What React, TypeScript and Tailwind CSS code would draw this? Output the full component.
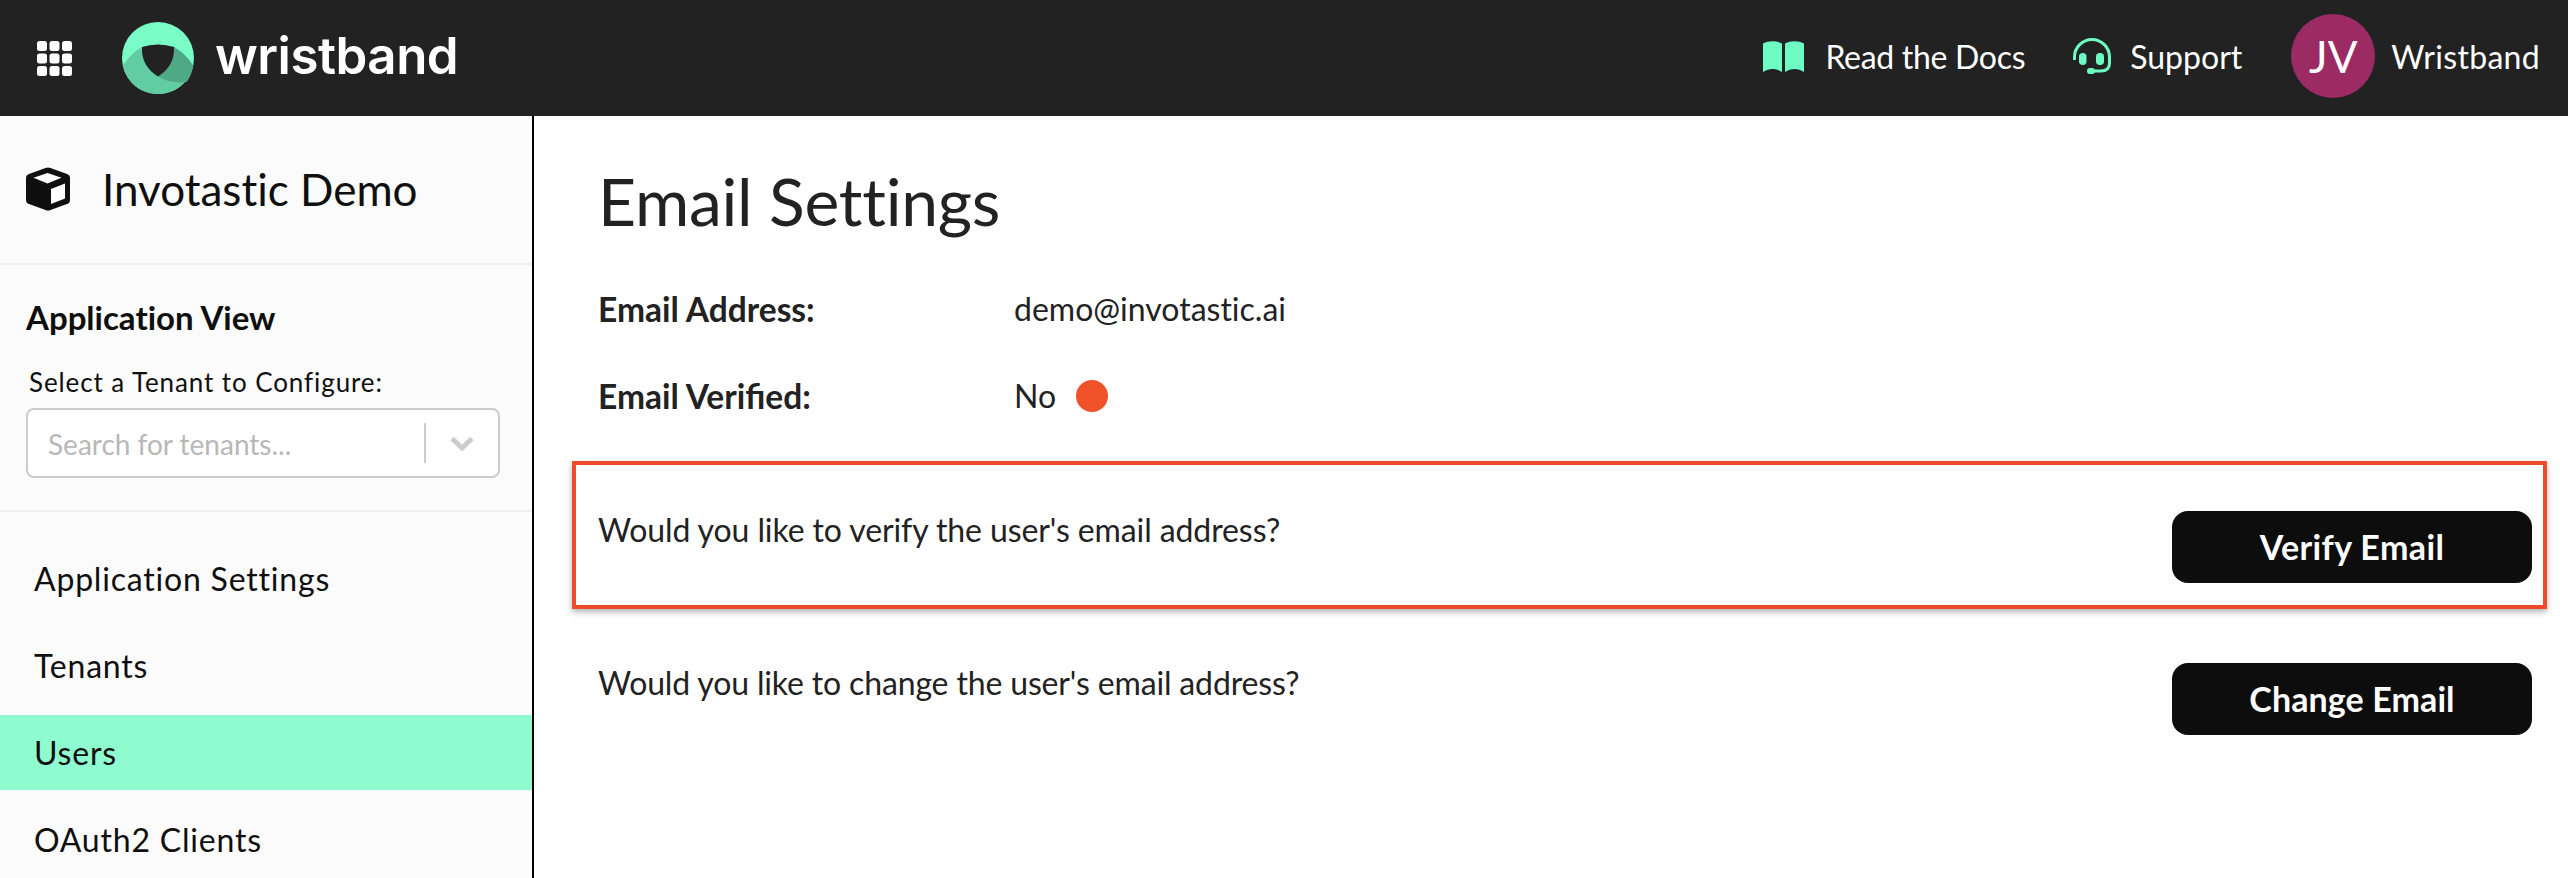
import React from 'react';

const GridIcon = () => (
  <svg width="35" height="35" viewBox="0 0 35 35" fill="#fff">
    {[0, 12.5, 25].map((y) =>
      [0, 12.5, 25].map((x) => <rect key={`${x}-${y}`} x={x} y={y} width="10" height="10" rx="2.5" />)
    )}
  </svg>
);

const Logo = () => (
  <svg width="72" height="72" viewBox="0 0 72 72">
    <circle cx="36" cy="36" r="36" fill="#79fcc6" />
    <path d="M0.8 43.7 Q8 32 20 25 Q36 20 52 25 Q64 32 71.2 43.7 A36 36 0 0 1 0.8 43.7 Z" fill="#62cda2" />
    <path d="M36 54.5 Q48 62 64.7 60 A36 36 0 0 0 71.2 43.7 Q64 32 52 25 Q53 44 36 54.5 Z" fill="#4fa987" />
    <path d="M20 25 Q36 20 52 25 Q53 44 36 54.5 Q19 44 20 25 Z" fill="#222222" />
  </svg>
);

const BookIcon = () => (
  <svg width="41" height="31" viewBox="0 0 41 31" fill="#6ffcc3">
    <path d="M0 2.5 C6 -0.5 13 -0.5 19 2.5 V31 C13 27 6 27 0 31 Z" />
    <path d="M22 2.5 C28 -0.5 35 -0.5 41 2.5 V31 C35 27 28 27 22 31 Z" />
  </svg>
);

const HeadsetIcon = () => (
  <svg width="38" height="36" viewBox="0 0 38 36" fill="none">
    <path d="M1.5 22 V19 A17.5 17.5 0 0 1 36.5 19 V25 Q36.5 33 28 33 H20" stroke="#6ffcc3" strokeWidth="3" />
    <rect x="6" y="15" width="7.5" height="12" rx="3.75" fill="#6ffcc3" />
    <rect x="23" y="15" width="8" height="12" rx="3.75" fill="#6ffcc3" />
    <rect x="14" y="30" width="8" height="6" rx="3" fill="#6ffcc3" />
  </svg>
);

const CubeIcon = () => (
  <svg width="44" height="44" viewBox="0 0 44 44">
    <path
      d="M19.5 1 Q22 0 24.5 1 L41 7 Q44 8 44 11 V33 Q44 36 41 37 L24.5 43 Q22 44 19.5 43 L3 37 Q0 36 0 33 V11 Q0 8 3 7 Z"
      fill="#0f0f0f"
    />
    <path d="M21.5 6 L35.5 10.8 L21.5 16.5 L7.5 10.8 Z" fill="#fff" />
    <path d="M25 22 L39 16.5 V31.5 L25 37 Z" fill="#fff" />
  </svg>
);

const Chevron = () => (
  <svg width="24" height="15" viewBox="0 0 24 15" fill="none">
    <path d="M2 2.5 L12 12 L22 2.5" stroke="#cccccc" strokeWidth="5" />
  </svg>
);

const navItems = ['Application Settings', 'Tenants', 'Users', 'OAuth2 Clients'];

const Header = () => (
  <header className="h-[116px] shrink-0 bg-[#222222] flex items-center justify-between pl-[37px] pr-[28px] text-white">
    <div className="flex items-center">
      <GridIcon />
      <div className="ml-[50px]">
        <Logo />
      </div>
      <span className="ml-[21px] pb-[5px] text-[51px] font-semibold leading-none tracking-[-0.5px] font-['Inter',sans-serif]">
        wristband
      </span>
    </div>
    <div className="flex items-center text-[32px] pb-[4px]">
      <BookIcon />
      <span className="ml-[21px] mt-[2px] tracking-[-0.3px]">Read the Docs</span>
      <div className="ml-[48px]">
        <HeadsetIcon />
      </div>
      <span className="ml-[19px] mt-[2px]">Support</span>
      <div className="ml-[49px] w-[84px] h-[84px] rounded-full bg-[#9c2a63] flex items-center justify-center text-[44px]">
        JV
      </div>
      <span className="ml-[16px] mt-[2px] tracking-[0.3px]">Wristband</span>
    </div>
  </header>
);

const Sidebar = () => (
  <aside className="w-[534px] shrink-0 bg-[#fbfbfb] border-r-2 border-black overflow-hidden text-[#0f0f0f]">
    <div className="h-[149px] flex items-center pl-[26px] pb-[1px] border-b-2 border-[#eeeeee]">
      <CubeIcon />
      <span className="ml-[32px] text-[44px]">Invotastic Demo</span>
    </div>
    <div className="h-[247px] px-[26px] pt-[34px] border-b-2 border-[#eeeeee]">
      <div className="text-[33px] font-bold leading-[36px]">Application View</div>
      <div className="mt-[30px] pl-[3px] text-[26px] leading-[34px] tracking-[0.9px]">Select a Tenant to Configure:</div>
      <div className="mt-[9px] w-[474px] h-[70px] bg-white border-2 border-[#cccccc] rounded-[8px] flex items-center pl-[20px]">
        <span className="flex-1 mt-[1px] text-[28px] text-[#b8b8b8]">Search for tenants...</span>
        <div className="w-[2px] h-[40px] bg-[#cccccc]" />
        <div className="w-[72px] flex justify-center">
          <Chevron />
        </div>
      </div>
    </div>
    <nav className="pt-[29px] flex flex-col gap-[12px]">
      {navItems.map((item) => (
        <div
          key={item}
          className={`h-[75px] flex items-center pl-[34px] text-[32px] tracking-[0.8px] ${
            item === 'Users' ? 'bg-[#8ffcd0]' : ''
          }`}
        >
          {item}
        </div>
      ))}
    </nav>
  </aside>
);

const Main = () => (
  <main className="relative flex-1 bg-white pl-[64px] text-[#222222] text-[32px]">
    <h1 className="mt-[47px] text-[66px] leading-[76px] tracking-[-0.25px]">Email Settings</h1>
    <div className="mt-[50px] flex items-center h-[40px]">
      <span className="w-[416px] text-[33.5px] font-bold">Email Address:</span>
      <span>demo@invotastic.ai</span>
    </div>
    <div className="mt-[47px] flex items-center h-[40px]">
      <span className="w-[416px] text-[33.5px] font-bold [font-variant-ligatures:normal]">Email Verified:</span>
      <span>No</span>
      <span className="ml-[20px] w-[32px] h-[32px] rounded-full bg-[#ef5229]" />
    </div>
    <div className="mt-[94px] flex justify-between items-start pr-[36px]">
      <span className="leading-[40px] tracking-[-0.1px]">Would you like to verify the user's email address?</span>
      <button className="mt-[1px] w-[360px] h-[72px] pb-[2px] rounded-[16px] bg-[#0d0d0d] text-white text-[34px] font-bold tracking-[0.4px]">
        Verify Email
      </button>
    </div>
    <div className="mt-[80px] flex justify-between items-start pr-[36px]">
      <span className="leading-[40px] tracking-[-0.15px]">Would you like to change the user's email address?</span>
      <button className="w-[360px] h-[72px] pb-[2px] rounded-[16px] bg-[#0d0d0d] text-white text-[34px] font-bold tracking-[0.1px]">
        Change Email
      </button>
    </div>
    <div className="absolute left-[38px] top-[345px] w-[1975px] h-[148px] border-[4px] border-[#ee4b2b] shadow-[0_3px_6px_rgba(0,0,0,0.3)]" />
  </main>
);

export default function App() {
  return (
    <div className="h-screen flex flex-col overflow-hidden font-['Lato',sans-serif] [font-variant-ligatures:no-common-ligatures]">
      <Header />
      <div className="flex flex-1 min-h-0">
        <Sidebar />
        <Main />
      </div>
    </div>
  );
}
